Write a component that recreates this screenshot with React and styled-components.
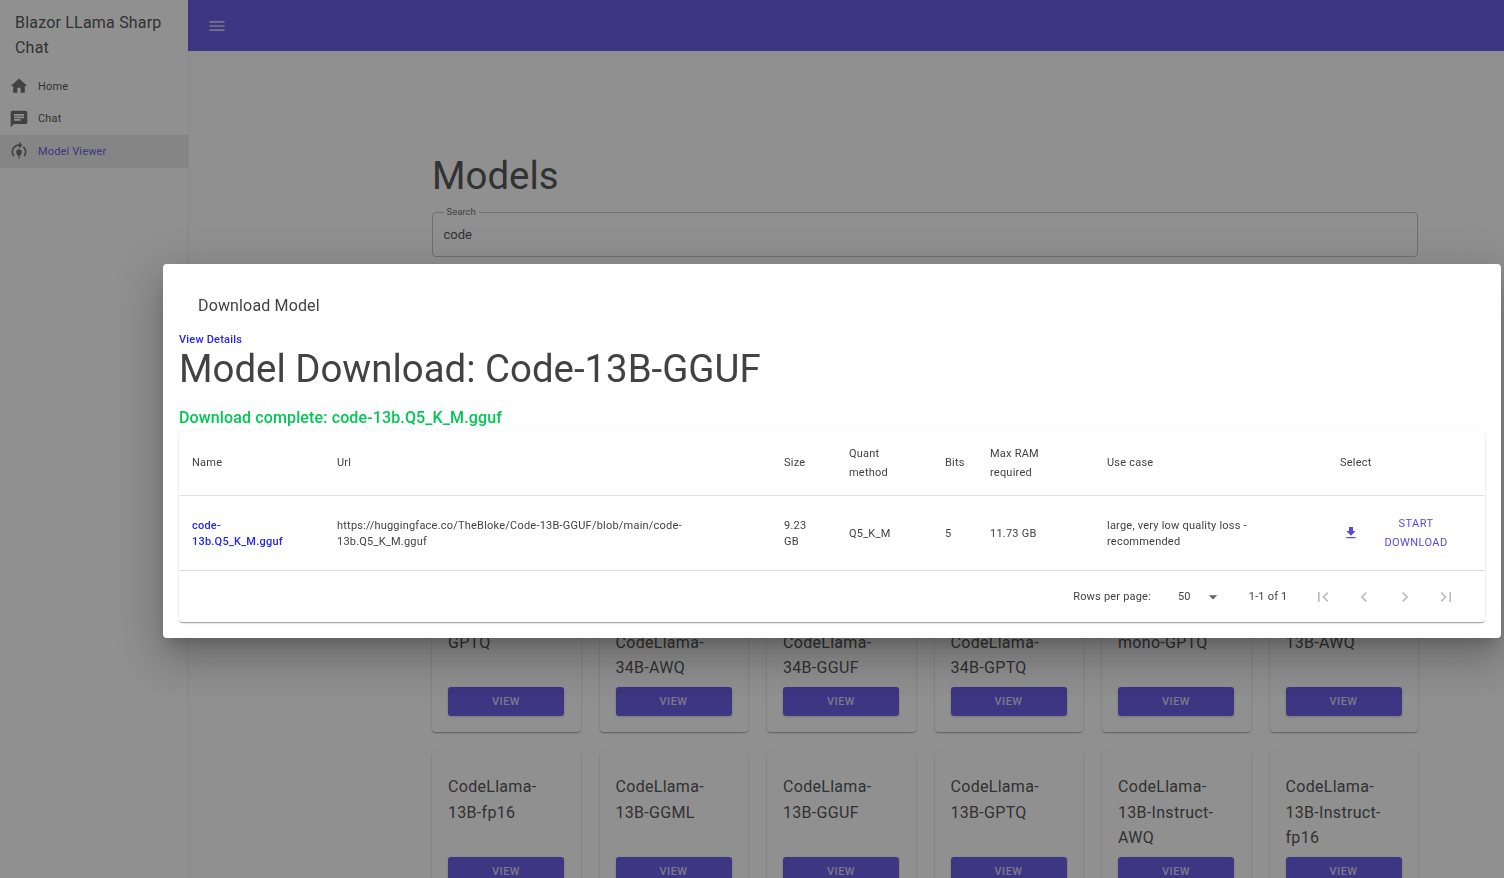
import React from 'react';
import styled, { createGlobalStyle } from 'styled-components';
import { MdHome, MdChat, MdModelTraining, MdMenu, MdFileDownload, MdArrowDropDown, MdFirstPage, MdLastPage, MdChevronLeft, MdChevronRight } from 'react-icons/md';

const GlobalStyle = createGlobalStyle`
  html, body {
    margin: 0;
    height: 100%;
    overflow: hidden;
    background: #fff;
    font-family: Roboto, "Liberation Sans", sans-serif;
    color: #424242;
  }
  * { box-sizing: border-box; }
`;

const Layout = styled.div`
  display: flex;
  height: 878px;
  overflow: hidden;
`;

const Drawer = styled.aside`
  width: 188px;
  flex-shrink: 0;
`;

const Brand = styled.div`
  padding: 10px 16px 0 15px;
  font-size: 16px;
  line-height: 25px;
  letter-spacing: 0.2px;
  height: 70px;
`;

const NavItem = styled.div`
  display: flex;
  align-items: center;
  gap: 9.5px;
  height: 32.5px;
  padding-left: 8.5px;
  font-size: 11px;
  letter-spacing: 0.15px;
  color: ${(props) => (props.active ? '#594ae2' : '#424242')};
  background: ${(props) => (props.active ? '#e9e9e9' : 'transparent')};
  svg { font-size: 20px; color: #616161; }
`;

const Main = styled.div`
  flex: 1;
  min-width: 0;
`;

const AppBar = styled.header`
  height: 51px;
  background: #594ae2;
  display: flex;
  align-items: center;
  padding-left: 19px;
  color: rgba(255, 255, 255, 0.7);
  svg { font-size: 20px; }
`;

const Content = styled.main`
  border-left: 1px solid #eeeeee;
  padding: 99px 0 0 243px;
  width: 1230px;
`;

const Title = styled.h1`
  margin: 0;
  font-size: 38.4px;
  font-weight: 400;
  line-height: 52px;
`;

const SearchBox = styled.div`
  position: relative;
  margin-top: 10px;
  height: 45px;
  border: 1px solid #bdbdbd;
  border-radius: 4px;
  display: flex;
  align-items: center;
  padding: 0 10.5px;
  font-size: 13px;
`;

const SearchLabel = styled.span`
  position: absolute;
  top: -7px;
  left: 10.5px;
  padding: 0 3px;
  background: #fff;
  font-size: 9.5px;
  line-height: 11px;
  color: #616161;
`;

const CardGrid = styled.div`
  display: grid;
  grid-template-columns: repeat(6, 148.5px);
  column-gap: 19px;
  row-gap: 20px;
  margin-top: 325px;
`;

const Card = styled.div`
  height: 150px;
  padding: 22px 16.5px 16px 16px;
  background: #fff;
  border-radius: 4px;
  box-shadow: 0 1px 3px rgba(0, 0, 0, 0.2), 0 1px 1px rgba(0, 0, 0, 0.14), 0 2px 1px -1px rgba(0, 0, 0, 0.12);
  display: flex;
  flex-direction: column;
`;

const CardName = styled.div`
  flex: 1;
  font-size: 16px;
  line-height: 25.6px;
  letter-spacing: 0.3px;
`;

const ViewButton = styled.div`
  height: 29px;
  background: #594ae2;
  border-radius: 3px;
  color: rgba(255, 255, 255, 0.75);
  font-size: 11px;
  font-weight: 500;
  letter-spacing: 0.5px;
  display: flex;
  align-items: center;
  justify-content: center;
  box-shadow: 0 1px 3px rgba(0, 0, 0, 0.2);
`;

const Overlay = styled.div`
  position: fixed;
  inset: 0;
  background: rgba(33, 33, 33, 0.5);
`;

const Dialog = styled.div`
  position: absolute;
  left: 163px;
  top: 264px;
  width: 1338px;
  height: 374px;
  background: #fff;
  border-radius: 4px;
  box-shadow: 0 11px 15px -7px rgba(0, 0, 0, 0.2), 0 24px 38px 3px rgba(0, 0, 0, 0.14), 0 9px 46px 8px rgba(0, 0, 0, 0.12);
  padding: 0 16px;
`;

const DialogTitle = styled.div`
  padding: 30px 0 0 19px;
  height: 69px;
  font-size: 16px;
  line-height: 24px;
  letter-spacing: 0.15px;
`;

const DetailsLink = styled.div`
  font-size: 11px;
  font-weight: 500;
  line-height: 14px;
  letter-spacing: 0.2px;
  color: #2626f2;
`;

const ModelTitle = styled.div`
  font-size: 38.4px;
  line-height: 43px;
  font-weight: 400;
`;

const DoneText = styled.div`
  margin: 16px 0 1px;
  font-size: 16px;
  line-height: 24px;
  font-weight: 500;
  letter-spacing: 0.13px;
  color: #00c853;
`;

const TablePaper = styled.div`
  border-radius: 4px;
  box-shadow: 0 2px 1px -1px rgba(0, 0, 0, 0.2), 0 1px 1px 0 rgba(0, 0, 0, 0.14), 0 1px 3px 0 rgba(0, 0, 0, 0.12);
`;

const Row = styled.div`
  display: grid;
  grid-template-columns: 145px 447px 65px 96px 45px 117px 233px 1fr;
  align-items: center;
  border-bottom: 1px solid #e0e0e0;
  font-size: 11px;
  line-height: 16px;
  letter-spacing: 0.22px;
`;

const HeadRow = styled(Row)`
  height: 65px;
  padding-bottom: 1px;
`;

const BodyRow = styled(Row)`
  height: 75px;
  padding-top: 1px;
`;

const HeadCell = styled.div`
  padding: 0 13px;
  line-height: 19px;
  color: #424242;
`;

const Cell = styled.div`
  padding: 0 13px;
  color: #424242;
`;

const NameLink = styled.span`
  font-weight: 500;
  color: #2626f2;
`;

const SelectCell = styled.div`
  display: flex;
  align-items: center;
  margin-top: -1px;
  padding-left: 16px;
`;

const DownloadIcon = styled.span`
  display: flex;
  color: #594ae2;
  font-size: 16px;
`;

const StartButton = styled.div`
  width: 86px;
  margin-left: 14px;
  text-align: center;
  font-size: 11px;
  line-height: 19px;
  letter-spacing: 0.4px;
  color: #594ae2;
`;

const Pager = styled.div`
  display: flex;
  align-items: center;
  justify-content: flex-end;
  height: 51px;
  font-size: 11px;
  letter-spacing: 0.2px;
  color: #424242;
`;

const PerPage = styled.span`
  margin-right: 27px;
`;

const PageSize = styled.span`
  display: flex;
  align-items: center;
  gap: 12px;
  margin-right: 26px;
  svg { font-size: 20px; color: #616161; }
`;

const PageInfo = styled.span`
  margin-right: 25.5px;
`;

const PagerIcons = styled.span`
  display: flex;
  gap: 21px;
  margin-right: 29px;
  color: #bdbdbd;
  svg { font-size: 20px; display: block; }
`;

const models = [
  'CodeLlama-GPTQ',
  'Phind-CodeLlama-34B-AWQ',
  'Phind-CodeLlama-34B-GGUF',
  'Phind-CodeLlama-34B-GPTQ',
  'CodeLlama-mono-GPTQ',
  'CodeLlama-13B-AWQ',
  'CodeLlama-13B-fp16',
  'CodeLlama-13B-GGML',
  'CodeLlama-13B-GGUF',
  'CodeLlama-13B-GPTQ',
  'CodeLlama-13B-Instruct-AWQ',
  'CodeLlama-13B-Instruct-fp16',
];

const App = () => (
  <>
    <GlobalStyle />
    <Layout>
      <Drawer>
        <Brand>Blazor LLama Sharp Chat</Brand>
        <NavItem><MdHome />Home</NavItem>
        <NavItem><MdChat />Chat</NavItem>
        <NavItem active><MdModelTraining />Model Viewer</NavItem>
      </Drawer>
      <Main>
        <AppBar><MdMenu /></AppBar>
        <Content>
          <Title>Models</Title>
          <SearchBox>
            <SearchLabel>Search</SearchLabel>
            code
          </SearchBox>
          <CardGrid>
            {models.map((name) => (
              <Card key={name}>
                <CardName>{name}</CardName>
                <ViewButton>VIEW</ViewButton>
              </Card>
            ))}
          </CardGrid>
        </Content>
      </Main>
    </Layout>
    <Overlay>
      <Dialog>
        <DialogTitle>Download Model</DialogTitle>
        <DetailsLink>View Details</DetailsLink>
        <ModelTitle>Model Download: Code-13B-GGUF</ModelTitle>
        <DoneText>Download complete: code-13b.Q5_K_M.gguf</DoneText>
        <TablePaper>
          <HeadRow>
            <HeadCell>Name</HeadCell>
            <HeadCell>Url</HeadCell>
            <HeadCell>Size</HeadCell>
            <HeadCell>Quant method</HeadCell>
            <HeadCell>Bits</HeadCell>
            <HeadCell>Max RAM required</HeadCell>
            <HeadCell>Use case</HeadCell>
            <HeadCell>Select</HeadCell>
          </HeadRow>
          <BodyRow>
            <Cell><NameLink>code-13b.Q5_K_M.gguf</NameLink></Cell>
            <Cell>https://huggingface.co/TheBloke/Code-13B-GGUF/blob/main/code-13b.Q5_K_M.gguf</Cell>
            <Cell>9.23 GB</Cell>
            <Cell>Q5_K_M</Cell>
            <Cell>5</Cell>
            <Cell>11.73 GB</Cell>
            <Cell>large, very low quality loss - recommended</Cell>
            <SelectCell>
              <DownloadIcon><MdFileDownload /></DownloadIcon>
              <StartButton>START DOWNLOAD</StartButton>
            </SelectCell>
          </BodyRow>
          <Pager>
            <PerPage>Rows per page:</PerPage>
            <PageSize>50 <MdArrowDropDown /></PageSize>
            <PageInfo>1-1 of 1</PageInfo>
            <PagerIcons>
              <MdFirstPage />
              <MdChevronLeft />
              <MdChevronRight />
              <MdLastPage />
            </PagerIcons>
          </Pager>
        </TablePaper>
      </Dialog>
    </Overlay>
  </>
);

export default App;
